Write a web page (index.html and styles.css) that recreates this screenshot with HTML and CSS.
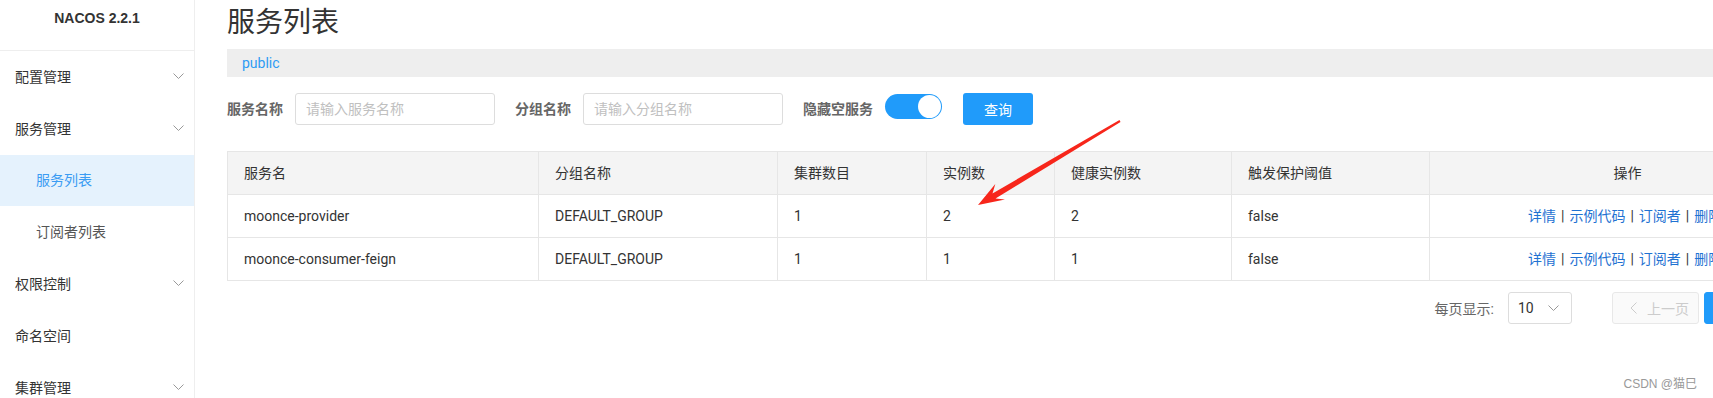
FILE: index.html
```html
<!DOCTYPE html>
<html lang="zh-CN">
<head>
  <meta charset="UTF-8" />
  <meta name="viewport" content="width=device-width, initial-scale=1.0"/>
  <title>Nacos - 服务列表</title>
  <link rel="stylesheet" href="styles.css">
</head>
<body>

  <div class="layout">
    <aside class="sidebar">
      <div class="logo">NACOS 2.2.1</div>
      <ul class="menu">
        <li class="menu-item">配置管理
          <svg class="chevron" width="11" height="6" viewBox="0 0 11 6"><polyline points="0.5,0.5 5.5,5.5 10.5,0.5"/></svg>
        </li>
        <li class="menu-item">服务管理
          <svg class="chevron" width="11" height="6" viewBox="0 0 11 6"><polyline points="0.5,0.5 5.5,5.5 10.5,0.5"/></svg>
        </li>
        <li class="menu-item sub active">服务列表</li>
        <li class="menu-item sub">订阅者列表</li>
        <li class="menu-item">权限控制
          <svg class="chevron" width="11" height="6" viewBox="0 0 11 6"><polyline points="0.5,0.5 5.5,5.5 10.5,0.5"/></svg>
        </li>
        <li class="menu-item">命名空间</li>
        <li class="menu-item">集群管理
          <svg class="chevron" width="11" height="6" viewBox="0 0 11 6"><polyline points="0.5,0.5 5.5,5.5 10.5,0.5"/></svg>
        </li>
      </ul>
    </aside>

    <main class="content">
      <h1 class="page-title">服务列表</h1>
      <div class="ns-bar"><span class="ns-link">public</span></div>

      <div class="filters">
        <label class="filter-label">服务名称</label>
        <input class="filter-input" type="text" placeholder="请输入服务名称">
        <label class="filter-label">分组名称</label>
        <input class="filter-input" type="text" placeholder="请输入分组名称">
        <label class="filter-label">隐藏空服务</label>
        <span class="switch"><span class="switch-knob"></span></span>
        <button class="btn-primary" type="button">查询</button>
      </div>

      <table class="service-table">
        <thead>
          <tr>
            <th class="col-name">服务名</th>
            <th class="col-group">分组名称</th>
            <th class="col-cluster">集群数目</th>
            <th class="col-inst">实例数</th>
            <th class="col-healthy">健康实例数</th>
            <th class="col-threshold">触发保护阈值</th>
            <th class="col-ops">操作</th>
          </tr>
        </thead>
        <tbody>
          <tr>
            <td>moonce-provider</td>
            <td>DEFAULT_GROUP</td>
            <td>1</td>
            <td>2</td>
            <td>2</td>
            <td>false</td>
            <td class="ops-cell"><a>详情</a><span class="sep">|</span><a>示例代码</a><span class="sep">|</span><a>订阅者</a><span class="sep">|</span><a>删除</a></td>
          </tr>
          <tr>
            <td>moonce-consumer-feign</td>
            <td>DEFAULT_GROUP</td>
            <td>1</td>
            <td>1</td>
            <td>1</td>
            <td>false</td>
            <td class="ops-cell"><a>详情</a><span class="sep">|</span><a>示例代码</a><span class="sep">|</span><a>订阅者</a><span class="sep">|</span><a>删除</a></td>
          </tr>
        </tbody>
      </table>

      <div class="pager">
        <span class="pager-label">每页显示:</span>
        <span class="page-size">10
          <svg class="chevron" width="11" height="6" viewBox="0 0 11 6"><polyline points="0.5,0.5 5.5,5.5 10.5,0.5"/></svg>
        </span>
        <span class="page-btn prev">
          <svg width="7" height="12" viewBox="0 0 7 12"><polyline points="6.5,0.5 1,6 6.5,11.5"/></svg>
          上一页
        </span>
        <span class="page-btn current">1</span>
        <span class="page-btn next">下一页</span>
      </div>
    </main>
  </div>

  <svg class="annotation" width="1713" height="398" viewBox="0 0 1713 398">
    <polygon points="1119.5,120.1 992.5,193.4 995.3,184.1 978,205 1005,199.5 995.5,198.6 1120.5,121.9"/>
  </svg>

  <div class="watermark">CSDN @猫巳</div>
</body>
</html>
```

FILE: styles.css
```css
body {
  margin: 0;
  font-family: Roboto, "Noto Sans CJK SC", sans-serif;
  font-size: 14px;
  color: #333;
  background-color: #fff;
  overflow: hidden;
  height: 398px;
}

.layout {
  display: flex;
  height: 100%;
}

/* sidebar */
.sidebar {
  width: 194px;
  flex-shrink: 0;
  border-right: 1px solid #eeeeee;
}

.logo {
  height: 50px;
  line-height: 36px;
  border-bottom: 1px solid #eeeeee;
  text-align: center;
  font-family: "Liberation Sans", Arial, sans-serif;
  font-weight: bold;
  font-size: 14px;
  color: #333;
}

.menu {
  list-style: none;
  margin: 0;
  padding: 0;
}

.menu-item {
  box-sizing: border-box;
  height: 51.8px;
  display: flex;
  align-items: center;
  justify-content: space-between;
  padding: 0 10px 2px 15px;
  color: #333;
}

.menu-item.sub {
  padding-left: 36px;
  color: #555;
}

.menu-item.active {
  background-color: #e5f2fd;
  color: #3a9cf3;
}

.chevron polyline {
  fill: none;
  stroke: #999;
  stroke-width: 1;
}

/* main content */
.content {
  flex: 1;
  min-width: 0;
  padding-left: 32px;
}

.page-title {
  margin: 5px 0 8px;
  font-size: 28px;
  line-height: 36px;
  font-weight: normal;
  color: #333;
}

.ns-bar {
  height: 28px;
  line-height: 28px;
  padding-left: 15px;
  background-color: #eeeeee;
}

.ns-link {
  color: #2f9cf4;
}

.filters {
  display: flex;
  align-items: center;
  margin-top: 16px;
}

.filter-label {
  font-weight: bold;
  color: #666;
  margin-right: 12px;
  line-height: 20px;
}

.filter-input {
  box-sizing: border-box;
  width: 200px;
  height: 32px;
  border: 1px solid #dddddd;
  border-radius: 3px;
  padding: 0 10px;
  margin-right: 20px;
  font-family: inherit;
  font-size: 14px;
  outline: none;
}

.filter-input::placeholder {
  color: #c0c0c0;
}

.switch {
  position: relative;
  width: 57px;
  height: 25px;
  border-radius: 13px;
  background-color: #209bfa;
  margin-right: 21px;
  margin-bottom: 6px;
}

.switch-knob {
  position: absolute;
  top: 1px;
  right: 1px;
  width: 23px;
  height: 23px;
  border-radius: 50%;
  background-color: #fff;
}

.btn-primary {
  width: 70px;
  height: 32px;
  border: none;
  border-radius: 3px;
  background-color: #209bfa;
  color: #fff;
  font-family: inherit;
  font-size: 14px;
}

/* table */
.service-table {
  margin-top: 26px;
  width: 1598px;
  table-layout: fixed;
  border-collapse: collapse;
  border: 1px solid #e6e6e6;
}

.service-table th,
.service-table td {
  box-sizing: border-box;
  border: 1px solid #e6e6e6;
  padding: 12px 16px;
  line-height: 18px;
  text-align: left;
  white-space: nowrap;
  overflow: hidden;
}

.service-table th {
  background-color: #f4f4f4;
  font-weight: normal;
}

.col-name { width: 311px; }
.col-group { width: 239px; }
.col-cluster { width: 149px; }
.col-inst { width: 128px; }
.col-healthy { width: 177px; }
.col-threshold { width: 198px; }
.col-ops { width: 396px; text-align: center !important; }

.ops-cell {
  padding-left: 98px !important;
}

.ops-cell a {
  color: #1f72d2;
}

.ops-cell .sep {
  margin: 0 5px;
}

/* pager */
.pager {
  width: 1598px;
  display: flex;
  justify-content: flex-end;
  align-items: center;
  margin-top: 11px;
}

.pager-label {
  color: #666;
  margin-right: 14px;
}

.page-size {
  box-sizing: border-box;
  width: 64px;
  height: 32px;
  border: 1px solid #dddddd;
  border-radius: 3px;
  display: flex;
  align-items: center;
  justify-content: space-between;
  padding: 0 12px 0 9px;
  margin-right: 40px;
}

.page-btn {
  box-sizing: border-box;
  height: 32px;
  border: 1px solid #dddddd;
  border-radius: 3px;
  display: flex;
  align-items: center;
}

.page-btn.prev {
  width: 87px;
  padding-left: 17px;
  gap: 10px;
  background-color: #fafafa;
  border-color: #e8e8e8;
  color: #cccccc;
  margin-right: 5px;
}

.page-btn.prev polyline {
  fill: none;
  stroke: #cccccc;
  stroke-width: 1;
}

.page-btn.current {
  width: 32px;
  justify-content: center;
  background-color: #209bfa;
  border-color: #209bfa;
  color: #fff;
  margin-right: 5px;
}

.page-btn.next {
  width: 84px;
  justify-content: center;
}

/* overlays */
.annotation {
  position: absolute;
  left: 0;
  top: 0;
  pointer-events: none;
}

.annotation polygon {
  fill: #f7261b;
}

.watermark {
  position: absolute;
  right: 16px;
  bottom: 7px;
  font-family: "Liberation Sans", "Noto Sans CJK SC", sans-serif;
  font-size: 12px;
  color: #999;
}
```
